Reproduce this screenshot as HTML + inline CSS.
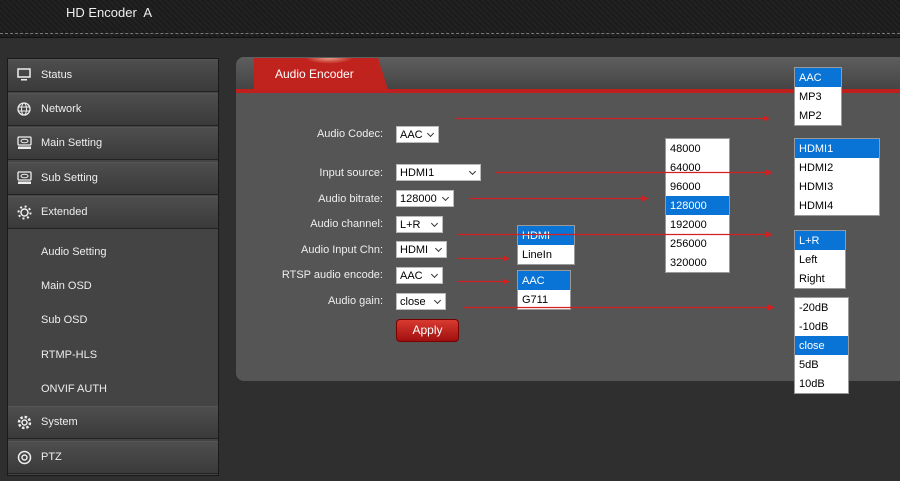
<!DOCTYPE html>
<html><head><meta charset="utf-8"><style>
*{margin:0;padding:0;box-sizing:border-box}
body{width:900px;height:481px;background:#2f2f2f;font-family:"Liberation Sans",Arial,sans-serif;position:relative;overflow:hidden;font-size:11px;color:#fff}
.abs{position:absolute}
#hdr{left:0;top:0;width:900px;height:38px;background:repeating-linear-gradient(45deg,#1b1b1b 0 2px,#222 2px 4px);border-bottom:1px solid #111}
#hdr .dash{position:absolute;left:0;top:33px;width:900px;border-top:1px dashed #777}
#hdr .t{position:absolute;left:66px;top:5px;font-size:13px;color:#eee}
#side{left:7px;top:58px;width:212px;height:418px;background:#444;border:1px solid #1a1a1a}
.it{position:absolute;left:0;width:210px;height:33px;background:linear-gradient(#4e4e4e,#3a3a3a);border-bottom:1px solid #222;border-top:1px solid #555;font-size:11px;line-height:31px;padding-left:33px;color:#eee}
.it svg{position:absolute;left:9px;top:8px}
.sub{position:absolute;left:33px;font-size:11px;color:#eee}
#panel{left:236px;top:57px;width:680px;height:324px;background:#555;border-radius:8px}
#ph{left:236px;top:57px;width:680px;height:33px;background:linear-gradient(#5e5e5e,#444);border-radius:8px 0 0 0}
#redline{left:236px;top:89px;width:664px;height:4px;background:#c0201d}
#tab{left:254px;top:58px;width:134px;height:32px;background:radial-gradient(ellipse 25px 6px at 75px 0,#e8a088,#c0231e 95%);clip-path:polygon(0 0,124px 0,134px 32px,0 32px);font-size:12px;line-height:32px;padding-left:21px;color:#fff}
.lbl{position:absolute;right:517px;font-size:11px;color:#eee;text-align:right;white-space:nowrap}
.sel{position:absolute;left:396px;height:17px;background:#fff;border:1px solid #bbb;color:#000;font-size:11px;line-height:16px;padding-left:3px}
.sel:after{content:"";position:absolute;right:5px;top:4px;width:4px;height:4px;border-right:1px solid #333;border-bottom:1px solid #333;transform:rotate(45deg)}
.dd{position:absolute;background:#fff;border:1px solid #999;color:#000;font-size:11px}
.dd div{height:19px;line-height:20px;padding-left:4px}
.dd .s{background:#0a74d6;color:#fff}
#apply{left:396px;top:319px;width:63px;height:23px;border-radius:4px;background:linear-gradient(#d83a30,#a01010);border:1px solid #700;font-size:12px;line-height:21px;text-align:center;color:#fff}
</style></head><body>
<div id="hdr" class="abs"><div class="t">HD Encoder&nbsp; A</div><div class="dash"></div></div>
<div id="side" class="abs">
<div class="it" style="top:0">Status<svg width="14" height="13"><rect x="1" y="1" width="12" height="8" fill="none" stroke="#eee" stroke-width="1.5"/><rect x="4" y="11" width="6" height="1.5" fill="#eee"/></svg></div>
<div class="it" style="top:34px">Network<svg width="15" height="15"><circle cx="7" cy="7" r="6" fill="none" stroke="#eee" stroke-width="1.3"/><ellipse cx="7" cy="7" rx="2.5" ry="6" fill="none" stroke="#eee"/><path d="M1 5H13M1 9H13" stroke="#eee"/></svg></div>
<div class="it" style="top:68px">Main Setting<svg width="15" height="14"><rect x="1" y="1" width="13" height="8" rx="1" fill="none" stroke="#eee" stroke-width="1.3"/><ellipse cx="7.5" cy="5" rx="3.5" ry="1.8" fill="none" stroke="#eee"/><rect x="1" y="10.5" width="13" height="2.5" fill="#eee"/></svg></div>
<div class="it" style="top:103px">Sub Setting<svg width="15" height="14"><rect x="1" y="1" width="13" height="8" rx="1" fill="none" stroke="#eee" stroke-width="1.3"/><ellipse cx="7.5" cy="5" rx="3.5" ry="1.8" fill="none" stroke="#eee"/><rect x="1" y="10.5" width="13" height="2.5" fill="#eee"/></svg></div>
<div class="it" style="top:137px">Extended<svg width="15" height="15"><circle cx="7.5" cy="7.5" r="3.5" fill="none" stroke="#eee" stroke-width="1.5"/><circle cx="7.5" cy="7.5" r="6" fill="none" stroke="#eee" stroke-width="2" stroke-dasharray="2 2.7"/></svg></div>
<div class="sub" style="top:187px">Audio Setting</div>
<div class="sub" style="top:221px">Main OSD</div>
<div class="sub" style="top:255px">Sub OSD</div>
<div class="sub" style="top:290px">RTMP-HLS</div>
<div class="sub" style="top:324px">ONVIF AUTH</div>
<div class="it" style="top:347px">System<svg width="15" height="15"><circle cx="7.5" cy="7.5" r="5.5" fill="none" stroke="#eee" stroke-width="2.5" stroke-dasharray="2.5 1.8"/><circle cx="7.5" cy="7.5" r="2.5" fill="none" stroke="#eee" stroke-width="1.5"/></svg></div>
<div class="it" style="top:382px">PTZ<svg width="15" height="15"><circle cx="7.5" cy="7.5" r="6" fill="none" stroke="#eee" stroke-width="1.5"/><circle cx="7.5" cy="7.5" r="2.5" fill="none" stroke="#eee" stroke-width="1.5"/></svg></div>
</div>
<div id="panel" class="abs"></div>
<div id="ph" class="abs"></div>
<div id="redline" class="abs"></div>
<div id="tab" class="abs">Audio Encoder</div>

<div class="lbl" style="top:128px">Audio Codec:</div>
<div class="lbl" style="top:167px">Input source:</div>
<div class="lbl" style="top:193px">Audio bitrate:</div>
<div class="lbl" style="top:218px">Audio channel:</div>
<div class="lbl" style="top:244px">Audio Input Chn:</div>
<div class="lbl" style="top:269px">RTSP audio encode:</div>
<div class="lbl" style="top:295px">Audio gain:</div>

<div class="sel" style="top:126px;width:43px">AAC</div>
<div class="sel" style="top:164px;width:85px">HDMI1</div>
<div class="sel" style="top:190px;width:58px">128000</div>
<div class="sel" style="top:216px;width:47px">L+R</div>
<div class="sel" style="top:241px;width:51px">HDMI</div>
<div class="sel" style="top:267px;width:47px">AAC</div>
<div class="sel" style="top:293px;width:50px">close</div>
<div id="apply" class="abs">Apply</div>

<div class="dd" style="left:794px;top:67px;width:48px"><div class="s">AAC</div><div>MP3</div><div>MP2</div></div>
<div class="dd" style="left:794px;top:138px;width:86px"><div class="s">HDMI1</div><div>HDMI2</div><div>HDMI3</div><div>HDMI4</div></div>
<div class="dd" style="left:794px;top:230px;width:52px"><div class="s">L+R</div><div>Left</div><div>Right</div></div>
<div class="dd" style="left:794px;top:297px;width:55px"><div>-20dB</div><div>-10dB</div><div class="s">close</div><div>5dB</div><div>10dB</div></div>
<div class="dd" style="left:665px;top:138px;width:65px"><div>48000</div><div>64000</div><div>96000</div><div class="s">128000</div><div>192000</div><div>256000</div><div>320000</div></div>
<div class="dd" style="left:517px;top:225px;width:58px"><div class="s">HDMI</div><div>LineIn</div></div>
<div class="dd" style="left:517px;top:270px;width:54px"><div class="s">AAC</div><div>G711</div></div>

<svg class="abs" style="left:0;top:0" width="900" height="481">
<g stroke="#d42020" stroke-width="1.2" fill="none">
<path d="M455 118.5H765M496 172.5H768M470 198.5H644M458 234.5H768M458 258.5H505M458 281.5H505M463 307.5H770"/>
</g>
<g fill="#d42020">
<path d="M763 115.5L770 118.5L763 121.5Z"/>
<path d="M766 169.5L773 172.5L766 175.5Z"/>
<path d="M642 195.5L649 198.5L642 201.5Z"/>
<path d="M766 231.5L773 234.5L766 237.5Z"/>
<path d="M503 255.5L510 258.5L503 261.5Z"/>
<path d="M503 278.5L510 281.5L503 284.5Z"/>
<path d="M768 304.5L775 307.5L768 310.5Z"/>
</g>
</svg>
</body></html>
